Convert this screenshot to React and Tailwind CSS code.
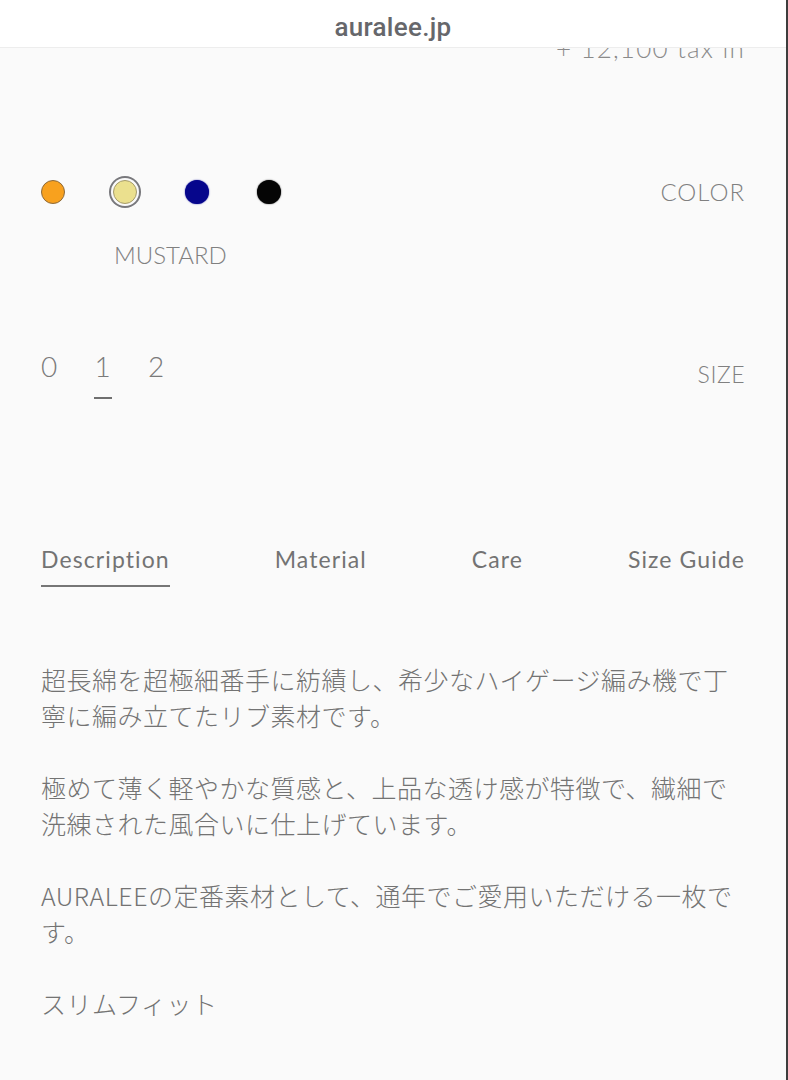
import React from "react";

const latin = { fontFamily: '"Lato", "Open Sans", sans-serif' };
const jp = { fontFamily: '"Noto Sans CJK JP", "Noto Sans", sans-serif' };

function Swatch({ className, selected }) {
  return (
    <div className="w-[24px] h-[24px] flex items-center justify-center">
      <div
        className={
          "w-[24px] h-[24px] rounded-full " +
          className +
          (selected ? " ring-2 ring-[#78787c] ring-offset-2 ring-offset-[#fafafa]" : "")
        }
      />
    </div>
  );
}

export default function App() {
  const tabs = ["Description", "Material", "Care", "Size Guide"];
  return (
    <div className="w-[788px] h-[1080px] bg-[#fafafa] border-r-2 border-[#3d3d3d] flex flex-col overflow-hidden">
      {/* Browser address bar */}
      <div className="h-[48px] shrink-0 bg-white border-b border-[#ededed] flex items-center justify-center relative z-10">
        <span
          className="text-[26px] leading-none font-medium text-[#66676b] tracking-[0.3px] mt-[6px]"
          style={{ fontFamily: 'Roboto, "Noto Sans", sans-serif' }}
        >
          auralee.jp
        </span>
      </div>

      <div className="flex-1 overflow-hidden pl-[41px] pr-[41px]">
        {/* Price (clipped under the bar) */}
        <div
          className="-mt-[13px] h-[26px] text-right text-[26px] leading-[26px] font-light tracking-[1.2px] text-[#8a8a8a]"
          style={latin}
        >
          + 12,100 tax in
        </div>

        {/* Color */}
        <div className="mt-[115px] h-[32px] flex items-center justify-between">
          <div className="flex items-center gap-[48px]">
            <Swatch className="bg-[#f8a11e] border border-[#8c6a3c]" />
            <Swatch className="bg-[#ebe08e] border border-[#a59b6c]" selected />
            <Swatch className="bg-[#06068c] shadow-[0_0_1.5px_#1a1a9a]" />
            <Swatch className="bg-[#050505] shadow-[0_0_1.5px_#222]" />
          </div>
          <span
            className="text-[24px] leading-[24px] font-light tracking-[1px] text-[#808080]"
            style={latin}
          >
            COLOR
          </span>
        </div>
        <div
          className="mt-[35px] ml-[73px] text-[24px] leading-[24px] font-light text-[#808080]"
          style={latin}
        >
          MUSTARD
        </div>

        {/* Size */}
        <div className="mt-[85px] flex items-start justify-between">
          <div className="flex items-start gap-[35.5px] -ml-[1px]">
            {["0", "1", "2"].map((s) => (
              <div key={s} className="w-[18px] flex flex-col items-center">
                <span
                  className="text-[28px] leading-[28px] font-light text-[#7a7a7a]"
                  style={latin}
                >
                  {s}
                </span>
                <div
                  className={
                    "mt-[17px] w-[18px] h-[2px] " +
                    (s === "1" ? "bg-[#6f6f6f]" : "bg-transparent")
                  }
                />
              </div>
            ))}
          </div>
          <span
            className="mt-[11px] text-[23px] leading-[23px] font-light tracking-[0.5px] text-[#808080]"
            style={latin}
          >
            SIZE
          </span>
        </div>

        {/* Tabs */}
        <div className="mt-[149px] flex items-start justify-between">
          {tabs.map((t, i) => (
            <div
              key={t}
              className={
                "pb-[14px] border-b-2 text-[23px] leading-[23px] tracking-[1.1px] text-[#737373] " +
                (i === 0 ? "border-[#767676]" : "border-transparent")
              }
              style={latin}
            >
              {t}
            </div>
          ))}
        </div>

        {/* Description */}
        <div
          className="mt-[74px] text-[25px] leading-[36px] tracking-[0.5px] font-light text-[#737373] flex flex-col gap-[36px]"
          style={jp}
        >
          <p>超長綿を超極細番手に紡績し、希少なハイゲージ編み機で丁寧に編み立てたリブ素材です。</p>
          <p>極めて薄く軽やかな質感と、上品な透け感が特徴で、繊細で洗練された風合いに仕上げています。</p>
          <p>AURALEEの定番素材として、通年でご愛用いただける一枚です。</p>
          <p>スリムフィット</p>
        </div>
      </div>
    </div>
  );
}
